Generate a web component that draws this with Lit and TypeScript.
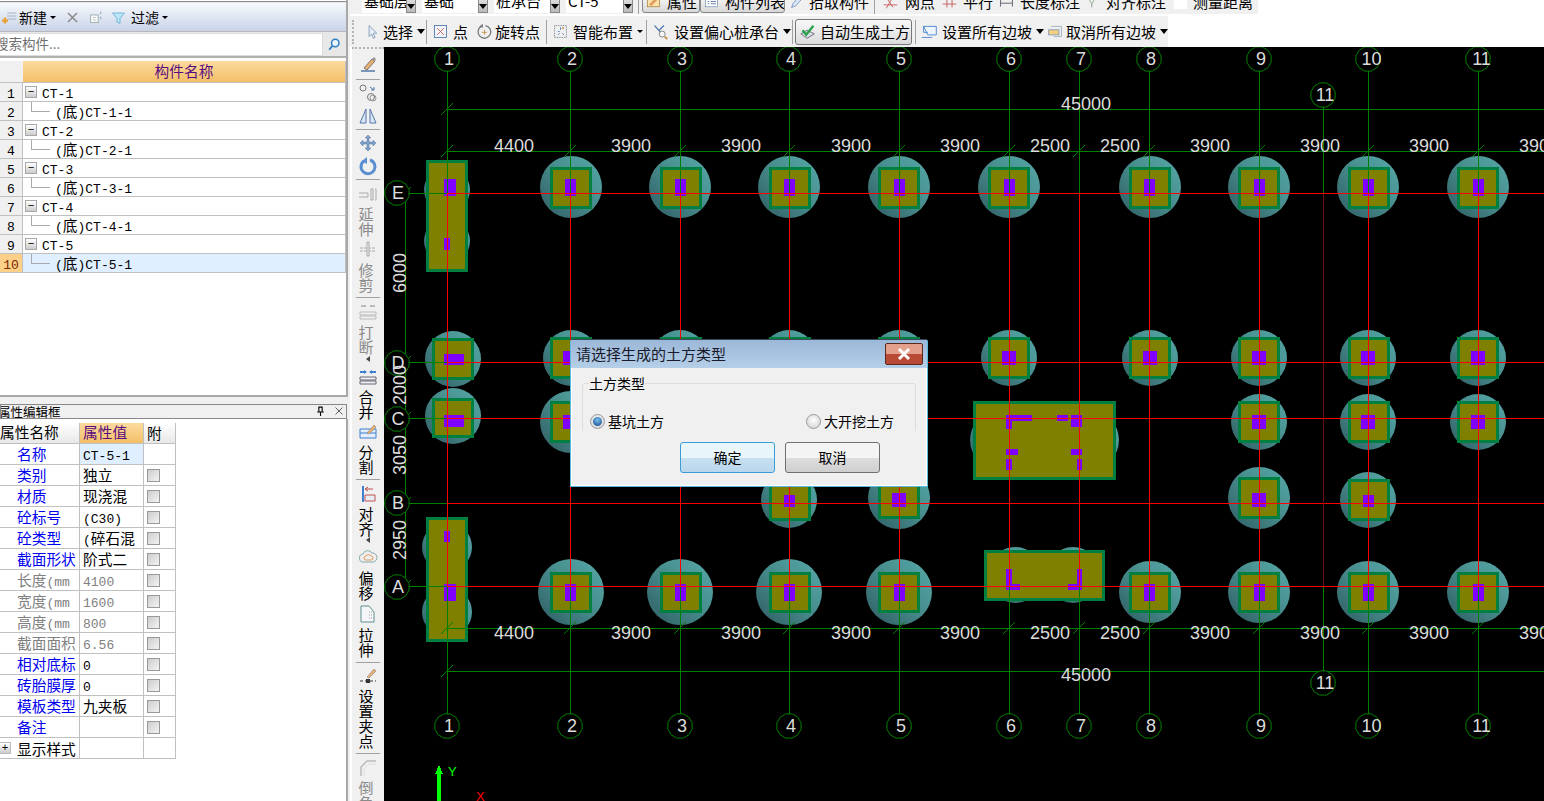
import { LitElement, html, css, svg } from 'lit';
import { customElement } from 'lit/decorators.js';

const ICONS: Record<string, any> = {
  pen: svg`<path d="M3 16h14" stroke="#5577aa" stroke-width="1.5"/><path d="M6 13l8-9 3 2-8 9z" fill="#e8b070" stroke="#777"/><path d="M14 4l3 2 1-2-2-2z" fill="#999"/>`,
  circles: svg`<circle cx="5" cy="5" r="3" fill="none" stroke="#777"/><circle cx="13" cy="14" r="3.5" fill="none" stroke="#777"/><circle cx="15" cy="15" r="3" fill="none" stroke="#999"/><path d="M12 4l4 3M16 4v3h-3" fill="none" stroke="#5577aa"/>`,
  mirror: svg`<path d="M8 3L2 17h6zM12 3l6 14h-6z" fill="#dce6f4" stroke="#5577aa"/>`,
  move: svg`<path d="M10 2l3 3h-2v4h4V7l3 3-3 3v-2h-4v4h2l-3 3-3-3h2v-4H5v2l-3-3 3-3v2h4V5H7z" fill="#7f9fc8" stroke="#5b7ba6" stroke-width=".5"/>`,
  rotate: svg`<path d="M6 5a7 7 0 1 0 6-1" fill="none" stroke="#5b8fd0" stroke-width="3"/><path d="M9 1v7l-5-3z" fill="#5b8fd0"/>`,
  extend: svg`<path d="M1 9h9v4H1M13 5h2v11h-2zM17 5h1v11h-1" fill="none" stroke="#aaa"/>`,
  trim: svg`<path d="M2 9h16M2 12h16" stroke="#aaa" stroke-dasharray="3 1"/><path d="M9 3h2v14H9z" fill="#eee" stroke="#aaa"/>`,
  breakIcon: svg`<path d="M3 4h5M12 4h5" stroke="#bbb" stroke-width="2"/><path d="M2 10h16v3H2zM2 14h16v3H2z" fill="none" stroke="#bbb"/>`,
  merge: svg`<path d="M2 5h6M18 5h-6" stroke="#3f7fd0" stroke-width="2"/><path d="M6 3l3 2-3 2zM14 3l-3 2 3 2z" fill="#3f7fd0"/><path d="M2 10h16v3H2zM2 14h16v3H2z" fill="none" stroke="#667"/>`,
  split: svg`<path d="M2 7h16v9H2z" fill="#e4eefa" stroke="#3f7fd0"/><path d="M2 11h16" stroke="#3f7fd0"/><path d="M9 11l7-8 2 2-7 7z" fill="#e8b070" stroke="#777" stroke-width=".5"/>`,
  align: svg`<path d="M5 2v16" stroke="#3f7fd0" stroke-width="2"/><path d="M7 11h10v6H7z" fill="#e8eef6" stroke="#c05050"/><path d="M7 5h8M10 3L7 5l3 2" fill="none" stroke="#c05050"/>`,
  offset: svg`<path d="M6 15a4 4 0 0 1-1-8 5 5 0 0 1 9-1 4.500 4.500 0 0 1 1 9z" fill="#eee" stroke="#8aa"/><path d="M8 13a2 2 0 0 1 0-4 3 3 0 0 1 5 0 2 2 0 0 1 0 4z" fill="none" stroke="#e09a60"/>`,
  stretch: svg`<path d="M3 2h8l5 6v10H3z" fill="#f4f6f8" stroke="#5f8f8f"/><path d="M11 8h4M11 11h4M11 14h4" stroke="#999" stroke-dasharray="1 1"/>`,
  grip: svg`<path d="M2 15h16" stroke="#333" stroke-dasharray="3 2"/><rect x="8" y="13" width="4" height="4" fill="#333"/><path d="M9 11l7-8 2 2-7 7z" fill="#e8b070" stroke="#777" stroke-width=".5"/>`,
  chamfer: svg`<path d="M3 18V9l6-6h9" fill="none" stroke="#bbb" stroke-width="1.500"/><path d="M6 18v-7l5-5h7" fill="none" stroke="#ddd"/>`,
  cursor: svg`<path d="M6 3v13l3-3 2 5 2-1-2-5h4z" fill="#e6edf6" stroke="#7d94b5"/>`,
  point: svg`<rect x="3" y="3" width="14" height="14" fill="#f2f6fc" stroke="#4a74ad"/><path d="M6 6l8 8M14 6l-8 8" stroke="#c05050"/>`,
  rotPoint: svg`<path d="M6 4a7.500 7.500 0 1 0 5-1" fill="none" stroke="#777" stroke-width="1.500"/><path d="M8 1v5L4 4z" fill="#777"/><path d="M10 8v6M7 11h6" stroke="#c08a40"/>`,
  smart: svg`<rect x="3" y="3" width="14" height="14" fill="none" stroke="#667" stroke-dasharray="1 1"/><path d="M10 5v3M7 10h2M12 12l2 2M7 14l2-2" stroke="#4a74ad"/><rect x="12" y="5" width="2" height="2" fill="#c08a40"/>`,
  offsetCap: svg`<path d="M3 3l8 9M14 3l-6 6" stroke="#4a74ad" stroke-width="1.500"/><circle cx="12" cy="13" r="3.500" fill="#f4f6f8" stroke="#777"/><path d="M15 16l3 3" stroke="#c08a40" stroke-width="2"/>`,
  check: svg`<path d="M2 12l7 5 8-5-8-4z" fill="#d8dde8" stroke="#667"/><path d="M4 8l4 5 8-10" fill="none" stroke="#25a045" stroke-width="2.500"/>`,
  slope: svg`<path d="M3 4h15v10H8z" fill="#eef4fb" stroke="#3f7fd0"/><path d="M3 4v7h5M1 17h12" fill="none" stroke="#3f7fd0"/>`,
  slopeOff: svg`<rect x="2" y="8" width="12" height="6" fill="#f2d080" stroke="#7d94b5"/><path d="M5 4h12v12H8" fill="none" stroke="#9ab"/>`,
  prop: svg`<rect x="2" y="3" width="16" height="14" fill="#fbe2a8" stroke="#a68040"/><path d="M4 14l8-8 3 2-8 8z" fill="#e09a60"/>`,
  list: svg`<rect x="2" y="3" width="16" height="14" fill="#fff" stroke="#7d94b5"/><path d="M5 7h2M5 10h2M5 13h2M9 7h7M9 10h7M9 13h7" stroke="#3a5f9a"/>`,
  pick: svg`<path d="M3 17l2-5 8-9 3 3-8 9z" fill="#dce6f4" stroke="#6f8fc0"/>`,
  net: svg`<path d="M2 14h16M14 3L5 18M5 5l8 12" stroke="#c05050"/>`,
  parallel: svg`<path d="M2 7h16M2 13h16M7 3v14M13 3v14" stroke="#c05050"/>`,
  length: svg`<path d="M3 6v10M17 6v10M3 12h14" stroke="#556"/><path d="M5 3h2M10 3h2" stroke="#8a7"/>`,
  alignDim: svg`<path d="M3 4l5 9 5-9" fill="none" stroke="#8a8"/><path d="M8 13v4" stroke="#888"/>`,
  doc: svg`<rect x="3" y="7" width="9" height="9" fill="#f4f6f8" stroke="#9aa"/><path d="M6 10h3M6 13h3" stroke="#bbb"/><path d="M15 3v3M15 9v3" stroke="#7d94b5"/>`,
  plus: svg`<path d="M7 4h12M7 8h12M7 12h12" stroke="#8fa0b8"/><path d="M4 10v8M0 14h8" stroke="#e8a030" stroke-width="3"/>`,
  del: svg`<path d="M4 4l12 12M16 4L4 16" stroke="#8c8c8c" stroke-width="2"/>`,
  filter: svg`<path d="M2 4h16l-6 7v7l-4-2v-5z" fill="#bfe6f6" stroke="#55a8d0"/>`,
  search: svg`<circle cx="11" cy="8" r="5" fill="#e8f4fc" stroke="#2f7fc0" stroke-width="2"/><path d="M7 12l-4 5" stroke="#2f7fc0" stroke-width="2.500"/>`,
  pin: svg`<path d="M6 2h8M7 2v9M13 2v9M4 11h12M10 11v7" fill="none" stroke="#000" stroke-width="2"/>`,
  closeX: svg`<path d="M3 3l14 14M17 3L3 17" stroke="#333" stroke-width="1.500"/>`,
};

const icon = (name: string, size = 20) =>
  html`<svg class="icon" width=${size} height=${size} viewBox="0 0 20 20">${ICONS[name]}</svg>`;

// latin goes in the mono font, at half the width of the cjk glyphs
const mix = (s: string) =>
  s.split(/([\x20-\x7e]+)/).map((p) => (/^[\x20-\x7e]+$/.test(p) ? html`<span class="lat">${p}</span>` : p));

const TREE = ['CT-1', 'CT-2', 'CT-3', 'CT-4', 'CT-5'];

const PROPS = [
  { n: '名称', v: 'CT-5-1', k: 'blue', active: true, nocheck: true },
  { n: '类别', v: '独立', k: 'blue' },
  { n: '材质', v: '现浇混', k: 'blue' },
  { n: '砼标号', v: '(C30)', k: 'blue' },
  { n: '砼类型', v: '(碎石混', k: 'blue' },
  { n: '截面形状', v: '阶式二', k: 'blue' },
  { n: '长度(mm', v: '4100', k: 'grey' },
  { n: '宽度(mm', v: '1600', k: 'grey' },
  { n: '高度(mm', v: '800', k: 'grey' },
  { n: '截面面积', v: '6.56', k: 'grey' },
  { n: '相对底标', v: '0', k: 'blue' },
  { n: '砖胎膜厚', v: '0', k: 'blue' },
  { n: '模板类型', v: '九夹板', k: 'blue' },
  { n: '备注', v: '', k: 'blue' },
];

type Slot = { w: number; iw?: number; icon?: string; label?: string; arrow?: string; sep?: boolean; on?: boolean; blank?: boolean };

const ROW1: Slot[] = [
  { w: 90, iw: 24, icon: 'pick', label: '拾取构件' },
  { w: 1, sep: true },
  { w: 60, iw: 30, icon: 'net', label: '网点' },
  { w: 58, iw: 28, icon: 'parallel', label: '平行' },
  { w: 87, iw: 27, icon: 'length', label: '长度标注' },
  { w: 86, iw: 26, icon: 'alignDim', label: '对齐标注' },
  { w: 27, blank: true },
  { w: 64, iw: 0, label: '测量距离' },
];

const ROW2: Slot[] = [
  { w: 64, iw: 21, icon: 'cursor', label: '选择', arrow: 'big' },
  { w: 1, sep: true },
  { w: 46, iw: 26, icon: 'point', label: '点' },
  { w: 73, iw: 22, icon: 'rotPoint', label: '旋转点' },
  { w: 1, sep: true },
  { w: 99, iw: 26, icon: 'smart', label: '智能布置', arrow: 'small' },
  { w: 1, sep: true },
  { w: 145, iw: 27, icon: 'offsetCap', label: '设置偏心桩承台', arrow: 'big' },
  { w: 1, sep: true },
  { w: 122, on: true, iw: 25, icon: 'check', label: '自动生成土方' },
  { w: 1, sep: true },
  { w: 128, iw: 26, icon: 'slope', label: '设置所有边坡', arrow: 'big' },
  { w: 123, iw: 22, icon: 'slopeOff', label: '取消所有边坡', arrow: 'big' },
];

type VTool = { sep?: boolean; h?: number; icon?: string; label?: string; grey?: boolean; arrow?: number; pad?: number };

const VTOOLS: VTool[] = [
  { h: 25, icon: 'pen' },
  { sep: true },
  { h: 23, icon: 'circles' },
  { h: 23, icon: 'mirror' },
  { sep: true },
  { h: 23, icon: 'move' },
  { h: 23, icon: 'rotate' },
  { sep: true },
  { h: 25, icon: 'extend', label: '延伸', grey: true },
  { h: 26, icon: 'trim', label: '修剪', grey: true, pad: 3 },
  { sep: true },
  { h: 25, icon: 'breakIcon', label: '打断', grey: true, arrow: 10 },
  { h: 25, icon: 'merge', label: '合并' },
  { h: 25, icon: 'split', label: '分割', pad: 3 },
  { sep: true },
  { h: 25, icon: 'align', label: '对齐', arrow: 8 },
  { h: 26, icon: 'offset', label: '偏移' },
  { h: 27, icon: 'stretch', label: '拉伸', pad: 3 },
  { sep: true },
  { h: 24, icon: 'grip', label: '设置夹点', pad: 3 },
  { sep: true },
  { h: 25, icon: 'chamfer', label: '倒角', grey: true },
];

// canvas data, page coordinates
const COLS = [447, 570, 680, 789, 899, 1009, 1079, 1149, 1259, 1368, 1478];
const ROWS = [
  { l: 'E', y: 193, by: 193 },
  { l: 'D', y: 362, by: 363 },
  { l: 'C', y: 418, by: 419 },
  { l: 'B', y: 503, by: 503 },
  { l: 'A', y: 586, by: 587 },
];

type Pile = { x: number; cy: number; r: number; top: number; bot: number; pw: number; pt: number; pb: number; cap?: number; px?: number };

// the drawing is a pixel off the axis on some columns
const CIRCLE_X: Record<number, number> = { 570: 571, 1149: 1150 };
const CAP_X: Record<number, number> = { 570: 571, 680: 681, 789: 790, 1149: 1150, 1368: 1369 };

const E = { cy: 187, r: 31, top: 167, bot: 209, pw: 11, pt: 179, pb: 196 };
const D = { cy: 358, r: 28, top: 337, bot: 379, pw: 14, pt: 351, pb: 365 };
const C = { cy: 422, r: 28, top: 401, bot: 443, pw: 14, pt: 415, pb: 429 };
const A = { cy: 592, r: 31, top: 572, bot: 613, pw: 11, pt: 584, pb: 601 };
const BIG = { cy: 498, r: 31, top: 477, bot: 519, pw: 14, pt: 493, pb: 507 };
const SMALL = { cy: 500, r: 28, top: 479, bot: 521, pw: 11, pt: 495, pb: 507 };

const PILES: Pile[] = [
  ...[570, 680, 789, 899, 1009, 1149, 1259, 1368, 1478].map((x) => ({ x, ...E })),
  ...[570, 680, 789, 899, 1009, 1259, 1368, 1478].map((x) => ({ x, ...D })),
  { x: 1149, ...D, px: 1150 },
  ...[1259, 1368, 1478].map((x) => ({ x, ...C })),
  { x: 570, ...C, r: 31 },
  { x: 789, ...SMALL },
  { x: 899, ...BIG },
  { x: 1259, ...BIG },
  { x: 1368, ...SMALL },
  ...[570, 680, 789, 899].map((x) => ({ x, ...A, r: 33 })),
  ...[1149, 1259, 1368, 1478].map((x) => ({ x, ...A })),
  { x: 453, cy: 359, r: 28, top: 338, bot: 380, pw: 20, pt: 354, pb: 365, px: 454, cap: 453 },
  { x: 453, cy: 416, r: 28, top: 398, bot: 438, pw: 20, pt: 415, pb: 427, px: 454, cap: 453 },
];

// big footings: [x, y, w, h]
const FOOTINGS = [
  { r: [426, 160, 42, 112], c: [[447, 190, 23], [447, 241, 23]] },
  { r: [426, 517, 42, 125], c: [[447, 547, 25], [447, 612, 25]] },
  { r: [973, 401, 143, 79], c: [[1000, 440, 30], [1089, 440, 30]] },
  { r: [984, 550, 121, 51], c: [[1015, 575, 28], [1073, 575, 28]] },
];

const PURPLE = [
  [444, 179, 12, 17], [444, 238, 6, 12], [444, 531, 6, 11], [444, 584, 12, 17],
  [1006, 415, 26, 6], [1006, 421, 6, 8], [1057, 415, 11, 6], [1071, 415, 11, 12],
  [1006, 449, 12, 6], [1071, 449, 11, 6], [1006, 459, 6, 11], [1077, 459, 5, 11],
  [1006, 569, 6, 21], [1006, 584, 14, 6], [1077, 569, 5, 21], [1068, 584, 14, 6],
];

const DIMS = [
  { t: '4400', x: 514 }, { t: '3900', x: 631 }, { t: '3900', x: 741 }, { t: '3900', x: 851 },
  { t: '3900', x: 960 }, { t: '2500', x: 1050 }, { t: '2500', x: 1120 }, { t: '3900', x: 1210 },
  { t: '3900', x: 1320 }, { t: '3900', x: 1429 }, { t: '3900', x: 1539 },
];

const SIDE_DIMS = [
  { t: '6000', y: 273 }, { t: '2000', y: 385 }, { t: '3050', y: 455 }, { t: '2950', y: 540 },
];

const bubblePts = (cx: number, cy: number, r = 12.5) =>
  Array.from({ length: 12 }, (_, i) => {
    const a = (i * Math.PI) / 6 + Math.PI / 12;
    return `${(cx + r * Math.cos(a)).toFixed(1)},${(cy + r * Math.sin(a)).toFixed(1)}`;
  }).join(' ');

const bubble = (cx: number, cy: number, label: string, dx = 2) => svg`
  <polygon class="bub" points=${bubblePts(cx, cy)}></polygon>
  <text class="lbl" x=${cx + dx} y=${cy + 6} text-anchor="middle">${label}</text>`;

const tick = (x: number, y: number) => svg`<line class="g thin" x1=${x - 6} y1=${y + 6} x2=${x + 6} y2=${y - 6}></line>`;

const hl = (cls: string, y: number, x1: number, x2: number) => svg`<rect class=${cls} x=${x1} y=${y} width=${x2 - x1} height="1"></rect>`;
const vl = (cls: string, x: number, y1: number, y2: number) => svg`<rect class=${cls} x=${x} y=${y1} width="1" height=${y2 - y1}></rect>`;

@customElement('app-root')
export class AppRoot extends LitElement {
  static styles = css`
    :host {
      display: grid;
      grid-template-columns: 350px 34px 1160px;
      grid-template-rows: 47px 754px;
      width: 1544px;
      height: 801px;
      overflow: hidden;
      position: relative;
      background: #fff;
      font-family: 'Noto Sans CJK SC', sans-serif;
      font-size: 14.7px;
      color: #000;
    }
    .lat { font-family: 'Liberation Mono', monospace; font-size: 13px; }
    .icon { display: block; flex: none; }

    /* left column */
    .left { grid-row: 1 / 3; display: flex; flex-direction: column; background: #f0f0f0; overflow: hidden; }
    .tree-panel { height: 397px; flex: none; background: #fff; border-bottom: 2px solid #a8a8a8; border-right: 2px solid #a8a8a8; box-sizing: border-box; display: flex; flex-direction: column; width: 348px; }
    .top-line { height: 3px; flex: none; background: linear-gradient(#fff 33%, #8a8a8a 33%, #8a8a8a 66%, #e8e8e8 66%); }
    .ltb { height: 29px; flex: none; display: flex; align-items: center; background: linear-gradient(#f6f8fc, #c9d4e8); border-bottom: 1px solid #b8b8b8; font-size: 14px; box-sizing: border-box; }
    .ltb .new { margin-left: 2px; }
    .tri-s { width: 0; height: 0; border: 3px solid transparent; border-top: 3px solid #000; border-bottom: 0; flex: none; }
    .search { height: 26px; flex: none; display: flex; background: #e8e8e8; border-bottom: 2px solid #b0b0b0; box-sizing: border-box; padding-top: 1px; }
    .search-box { width: 323px; height: 23px; background: #fff; border: 1px solid #ddd; border-left: 0; font-size: 13.5px; line-height: 19px; color: #707070; text-indent: -5px; overflow: hidden; box-sizing: border-box; }
    .search-btn { flex: 1; display: flex; justify-content: center; align-items: center; }
    .tree { margin-top: 3px; width: 346px; flex: none; border-right: 1px solid #c0c0c0; box-sizing: border-box; }
    .tree-head { display: flex; height: 22px; border-bottom: 1px solid #c0c0c0; box-sizing: border-box; }
    .num-head { width: 23px; background: #f0f0f0; flex: none; }
    .orange { background: linear-gradient(#fcdb9e, #f3bf68); color: #5a0a80; }
    .tree-head .orange { flex: 1; text-align: center; line-height: 19px; }
    .tree-row { display: flex; height: 19px; border-bottom: 1px solid #c0c0c0; box-sizing: border-box; line-height: 17px; }
    .tree-row .num { width: 23px; flex: none; background: #f0f0f0; border-right: 1px solid #c0c0c0; text-align: center; box-sizing: border-box; }
    .tree-row.sel { background: #dfefff; }
    .tree-row.sel .num { background: #fdd08a; color: #7a2a00; }
    .exp { width: 12px; height: 12px; border: 1px solid #a8a8a8; background: linear-gradient(#fff, #ccc); margin: 3px 5px 0 2px; box-sizing: border-box; display: flex; align-items: center; justify-content: center; flex: none; font: 11px/10px 'Liberation Mono', monospace; }
    .elbow { width: 19px; height: 10px; border-left: 1px solid #aaa; border-bottom: 1px solid #aaa; margin: 0 5px 0 8px; box-sizing: border-box; flex: none; }

    .title { margin-top: 7px; flex: none; width: 347px; border: 1px solid #888; box-sizing: border-box; background: #f0f0f0; display: flex; align-items: center; font-size: 12.5px; height: 15px; text-indent: -3px; overflow: hidden; }
    .title span { flex: 1; }
    .title .btns { flex: none; display: flex; gap: 8px; margin-right: 2px; }
    .prop-panel { flex: 1; width: 348px; background: #fff; border-right: 2px solid #a8a8a8; box-sizing: border-box; padding-top: 4px; }
    .pt { width: 176px; border-right: 1px solid #c0c0c0; box-sizing: border-box; }
    .pr { display: grid; grid-template-columns: 80px 64px 31px; height: 21px; border-bottom: 1px solid #c0c0c0; box-sizing: border-box; line-height: 19px; }
    .pr > div { border-right: 1px solid #c0c0c0; overflow: hidden; white-space: nowrap; }
    .pr > div:last-child { border-right: 0; display: flex; align-items: center; }
    .pr .name { padding-left: 17px; }
    .pr .val { padding-left: 3px; }
    .ph { background: linear-gradient(#fff, #e8e8e8); }
    .pr.ph .orange { padding-left: 3px; background: linear-gradient(#fcdb9e, #f3bf68); }
    .pr.ph > div:last-child { padding-left: 3px; }
    .ph > div { line-height: 18px; }
    .blue { color: #0000f0; }
    .grey { color: #808080; }
    .active { background: #dfefff; }
    .chk { width: 13px; height: 13px; border: 1px solid #999; margin-left: 3px; background: linear-gradient(135deg, #ccc, #f4f4f4); box-sizing: border-box; }
    .expand-row .name { padding-left: 0; display: flex; align-items: center; gap: 6px; }
    .plus { width: 12px; height: 12px; border: 1px solid #bbb; margin-left: -1px; background: linear-gradient(#fff, #ccc); font: 11px/10px 'Liberation Mono', monospace; text-align: center; box-sizing: border-box; flex: none; }

    /* top toolbars */
    .top { grid-column: 2 / 4; display: flex; flex-direction: column; background: #fff; overflow: hidden; font-size: 15px; }
    .row1 { height: 14px; width: 908px; background: #f0f0f0; display: flex; align-items: flex-end; flex: none; padding-left: 12px; box-sizing: border-box; }
    .row2 { margin-top: 2px; height: 31px; width: 818px; background: #f0f0f0; display: flex; align-items: center; flex: none; padding-left: 2px; box-sizing: border-box; }
    .grips { width: 4px; height: 24px; margin-right: 6px; flex: none; border-left: 2px dotted #b4b4b4; box-sizing: border-box; }
    .combo { display: flex; height: 20px; margin: 0 6px 1px 0; background: #fff; flex: none; }
    .combo .txt { padding-left: 2px; overflow: hidden; white-space: nowrap; line-height: 15px; box-sizing: border-box; }
    .combo .drop { width: 10px; background: linear-gradient(#eee, #bbb); border: 1px solid #888; box-sizing: border-box; display: flex; align-items: flex-end; justify-content: center; padding-bottom: 3px; }
    .tri { width: 0; height: 0; flex: none; border: 4px solid transparent; border-top: 5px solid #000; border-bottom: 0; }
    .row1 .sepv { height: 14px; margin-left: -1px; }
    .row1 .slot .sepv { margin-left: 0; }
    .row1 .slot { padding-bottom: 5px; box-sizing: border-box; }
    .sepv { width: 1px; height: 24px; background: #a0a0a0; flex: none; }
    .slot { display: flex; align-items: center; flex: none; white-space: nowrap; height: 20px; line-height: 20px; }
    .slot .ic { display: flex; justify-content: center; flex: none; }
    .slot .tri, .slot .tri-s { margin-left: 4px; }
    .toggled { border: 1px solid #888; border-radius: 3px; background: linear-gradient(#fbfbfb, #d8d8d8); height: 19px; margin-bottom: 1px; padding: 0 0 4px 3px; box-sizing: border-box; display: flex; align-items: center; gap: 4px; flex: none; font-size: 15px; white-space: nowrap; line-height: 15px; overflow: hidden; }
    .auto { margin-left: 2px; margin-right: 3px; width: 117px; height: 26px; border: 1px solid #777; border-radius: 3px; background: linear-gradient(#f8f8f8, #dcdcdc); display: flex; align-items: center; box-sizing: border-box; }
    .auto .ic { width: 24px; display: flex; justify-content: center; }
    .blankbox { width: 13px; height: 14px; margin-left: 8px; background: #fff; }

    /* vertical toolbar */
    .vbar { background: #f0f0f0; border-left: 2px solid #fff; box-sizing: border-box; display: flex; flex-direction: column; align-items: center; overflow: hidden; }
    .vgrip { height: 5px; width: 100%; border-top: 2px dotted #b4b4b4; box-sizing: border-box; flex: none; }
    .vsep { height: 4px; width: 24px; display: flex; align-items: center; flex: none; }
    .vsep i { display: block; height: 1px; width: 100%; background: #a0a0a0; }
    .vt { display: flex; flex-direction: column; align-items: center; flex: none; }
    .vi { display: flex; align-items: center; justify-content: center; }
    .vl { font-size: 15px; line-height: 15px; width: 16px; margin-right: 4px; text-align: center; word-break: break-all; }
    .vl.off { color: #8a8a8a; }
    .varr-wrap { display: flex; align-items: center; }
    .varr { width: 0; height: 0; border: 3px solid transparent; border-right: 4px solid #444; border-left: 0; }

    /* canvas */
    .canvas { display: block; background: #000; shape-rendering: crispEdges; }
    .canvas text { font-family: 'Liberation Sans', sans-serif; font-size: 18px; fill: #dcdcdc; shape-rendering: auto; }
    .bub { fill: #000; stroke: #008000; stroke-width: 1; shape-rendering: auto; }
    .canvas line.g { stroke: #008000; shape-rendering: auto; }
    .gl { fill: #008000; }
    .rl { fill: #ff0000; }
    .dl { fill: #6a1010; }
    .pile { fill: url(#teal); shape-rendering: auto; }
    .capo { fill: #008040; }
    .capi { fill: #808000; }
    .pu { fill: #8000ff; }
    .axis-y { fill: #00ff00; }
    .canvas text.ax { font-size: 13px; }

    /* dialog */
    .dlg { position: absolute; left: 570px; top: 339px; width: 358px; height: 148px; background: #f0f0f0; border: 1px solid #5bb9d9; border-top-color: #3a4a5a; border-radius: 3px 3px 0 0; box-sizing: border-box; font-size: 14px; box-shadow: inset 0 0 0 1px #fff; }
    .dlg-title { height: 28px; display: flex; align-items: center; padding: 0 0 2px 5px; box-sizing: border-box; background: linear-gradient(#9cb8d8, #b5cfe8); font-size: 15px; color: #1a1a2a; position: relative; }
    .dlg-close { position: absolute; right: 4px; top: 3px; width: 38px; height: 22px; border: 1px solid #5a2a20; border-radius: 2px; box-sizing: border-box; background: linear-gradient(#e3a08c 0 50%, #b84a36 50%); display: flex; align-items: center; justify-content: center; }
    fieldset { margin: 7px 11px 0 11px; padding: 0; height: 56px; border: 1px solid #dcdcdc; border-bottom: 0; border-radius: 3px 3px 0 0; box-sizing: border-box; display: flex; min-width: 0; }
    legend { margin-left: 6px; padding: 0; line-height: 16px; }
    .radios { display: flex; justify-content: space-between; width: 100%; padding: 20px 21px 0 7px; box-sizing: border-box; line-height: 20px; }
    .radio { display: flex; align-items: center; gap: 3px; }
    .rd { width: 15px; height: 15px; border-radius: 50%; border: 1px solid #999; box-sizing: border-box; background: radial-gradient(circle at 50% 40%, #fff, #ccc); display: flex; align-items: center; justify-content: center; }
    .rd.on i { display: block; width: 9px; height: 9px; border-radius: 50%; background: radial-gradient(circle at 50% 35%, #7ac0f0, #0a3f80); }
    .btns-row { display: flex; gap: 10px; margin: 11px 0 0 109px; }
    .btn { width: 95px; height: 31px; border-radius: 3px; box-sizing: border-box; text-align: center; line-height: 29px; font-size: 14px; }
    .btn.pri { border: 1px solid #3c9cd8; background: linear-gradient(#e8f5fa 0 50%, #c8e0f0 50%, #b9d6ec); }
    .btn.sec { border: 1px solid #707070; background: linear-gradient(#f4f4f4 0 50%, #dedede 50%, #cfcfcf); }
  `;

  renderTree() {
    const rows: unknown[] = [];
    TREE.forEach((name, i) => {
      rows.push(html`<div class="tree-row">
        <div class="num"><span class="lat">${i * 2 + 1}</span></div>
        <div class="exp">−</div>
        <span>${mix(name)}</span>
      </div>`);
      rows.push(html`<div class="tree-row ${i === 4 ? 'sel' : ''}">
        <div class="num"><span class="lat">${i * 2 + 2}</span></div>
        <div class="elbow"></div>
        <span>${mix('(底)' + name + '-1')}</span>
      </div>`);
    });
    return rows;
  }

  renderProps() {
    return PROPS.map(
      (p) => html`<div class="pr">
        <div class="name ${p.k}">${mix(p.n)}</div>
        <div class="val ${p.active ? 'active' : ''} ${p.k === 'grey' ? 'grey' : ''}">${mix(p.v)}</div>
        <div>${p.nocheck ? '' : html`<div class="chk"></div>`}</div>
      </div>`
    );
  }

  renderSlot(s: Slot) {
    if (s.sep) return html`<div class="sepv"></div>`;
    if (s.blank) return html`<div class="slot" style="width:${s.w}px"><div class="blankbox"></div></div>`;
    if (s.on)
      return html`<div class="slot" style="width:${s.w}px;height:26px">
        <div class="auto"><div class="ic">${icon(s.icon!, 18)}</div>${s.label}</div>
      </div>`;
    return html`<div class="slot" style="width:${s.w}px">
      <div class="ic" style="width:${s.iw}px">${s.icon ? icon(s.icon, 17) : ''}</div>
      ${s.label}
      ${s.arrow === 'big' ? html`<div class="tri"></div>` : s.arrow === 'small' ? html`<div class="tri-s"></div>` : ''}
    </div>`;
  }

  renderTop() {
    const combos = [
      ['基础层', 44],
      ['基础', 56],
      ['桩承台', 56],
      ['CT-5', 57],
    ] as const;
    return html`<div class="top">
      <div class="row1">
        ${combos.map(
          ([t, w]) => html`<div class="combo">
            <div class="txt" style="width:${w}px">${t}</div>
            <div class="drop"><div class="tri"></div></div>
          </div>`
        )}
        <div class="sepv"></div>
        <div class="toggled" style="margin-left:3px;width:58px">${icon('prop', 15)}<span style="margin-left:2px">属性</span></div>
        <div class="toggled" style="width:85px">${icon('list', 15)}<span style="margin-left:2px">构件列表</span></div>
        ${ROW1.map((s) => this.renderSlot(s))}
      </div>
      <div class="row2">
        <div class="grips"></div>
        ${ROW2.map((s) => this.renderSlot(s))}
      </div>
    </div>`;
  }

  renderVbar() {
    return html`<div class="vbar">
      <div class="vgrip"></div>
      ${VTOOLS.map((t) =>
        t.sep
          ? html`<div class="vsep"><i></i></div>`
          : html`<div class="vt" style="padding-bottom:${t.pad ?? 0}px">
              <div class="vi" style="height:${t.h}px">${icon(t.icon!)}</div>
              ${t.label ? html`<div class="vl ${t.grey ? 'off' : ''}">${t.label}</div>` : ''}
              ${t.arrow ? html`<div class="varr-wrap" style="height:${t.arrow}px"><div class="varr"></div></div>` : ''}
            </div>`
      )}
    </div>`;
  }

  renderCanvas() {
    return html`<svg class="canvas" width="1160" height="754" viewBox="384 47 1160 754">
      <defs>
        <linearGradient id="teal" x1="0" y1="1" x2="1" y2="0">
          <stop offset="0" stop-color="#2f5c62"></stop>
          <stop offset="0.6" stop-color="#4a9292"></stop>
          <stop offset="1" stop-color="#56a8a8"></stop>
        </linearGradient>
      </defs>
      ${PILES.map((p) => svg`<circle class="pile" cx=${CIRCLE_X[p.x] ?? p.x} cy=${p.cy} r=${p.r}></circle>`)}
      ${FOOTINGS.flatMap((f) => f.c.map((c) => svg`<circle class="pile" cx=${c[0]} cy=${c[1]} r=${c[2]}></circle>`))}
      ${PILES.map((p) => {
        const cx = p.cap ?? CAP_X[p.x] ?? p.x;
        const mid = p.px ?? p.x;
        return svg`
          <rect class="capo" x=${cx - 21} y=${p.top} width="42" height=${p.bot - p.top}></rect>
          <rect class="capi" x=${cx - 18} y=${p.top + 3} width="36" height=${p.bot - p.top - 6}></rect>
          <rect class="pu" x=${mid - Math.floor(p.pw / 2)} y=${p.pt} width=${p.pw} height=${p.pb - p.pt}></rect>`;
      })}
      ${FOOTINGS.map(
        ({ r: [x, y, w, h] }) => svg`
          <rect class="capo" x=${x} y=${y} width=${w} height=${h}></rect>
          <rect class="capi" x=${x + 3} y=${y + 3} width=${w - 6} height=${h - 6}></rect>`
      )}
      ${PURPLE.map(([x, y, w, h]) => svg`<rect class="pu" x=${x} y=${y} width=${w} height=${h}></rect>`)}

      ${hl('gl', 109, 447, 1544)} ${hl('gl', 151, 447, 1544)} ${hl('gl', 628, 447, 1544)} ${hl('gl', 671, 447, 1544)}
      ${vl('gl', 405, 193, 587)}
      ${ROWS.map((r) => svg`${hl('gl', r.y, 384, 447)}${hl('rl', r.y, 447, 1544)}${tick(405, r.y)}`)}
      ${COLS.map(
        (x) => svg`
          ${vl('gl', x, 71, 193)}${vl('rl', x, 193, 587)}${vl('gl', x, 587, 714)}
          ${tick(x, 151)}${tick(x, 628)}`
      )}
      ${tick(447, 109)}${tick(447, 671)}
      ${vl('gl', 1323, 107, 193)}${vl('dl', 1323, 194, 586)}${vl('gl', 1323, 587, 671)}

      ${COLS.map((x, i) => {
        const dx = i >= 9 ? 3.5 : 2;
        return svg`${bubble(x, 59, String(i + 1), dx)}${bubble(x, 726, String(i + 1), dx)}`;
      })}
      ${bubble(1323, 95, '11')}${bubble(1323, 683, '11')}
      ${ROWS.map((r) => bubble(397, r.by, r.l, 1))}

      ${DIMS.map(
        (d) => svg`
          <text x=${d.x} y="152" text-anchor="middle">${d.t}</text>
          <text x=${d.x} y="639" text-anchor="middle">${d.t}</text>`
      )}
      <text x="1086" y="110" text-anchor="middle">45000</text>
      <text x="1086" y="681" text-anchor="middle">45000</text>
      ${SIDE_DIMS.map(
        (d) => svg`<text transform="translate(406 ${d.y}) rotate(-90)" text-anchor="middle">${d.t}</text>`
      )}

      <rect class="axis-y" x="437" y="773" width="4" height="28"></rect>
      <polygon class="axis-y" points="439,765 443,774 435,774"></polygon>
      <text class="ax" x="448" y="776" style="fill:#00ff00">Y</text>
      <text class="ax" x="476" y="801" style="fill:#ff0000">X</text>
    </svg>`;
  }

  renderDialog() {
    return html`<div class="dlg">
      <div class="dlg-title">
        请选择生成的土方类型
        <div class="dlg-close">
          <svg width="14" height="12" viewBox="0 0 14 12"><path d="M2 1l10 10M12 1L2 11" stroke="#fff" stroke-width="3"></path></svg>
        </div>
      </div>
      <fieldset>
        <legend>土方类型</legend>
        <div class="radios">
          <div class="radio"><div class="rd on"><i></i></div>基坑土方</div>
          <div class="radio"><div class="rd"></div>大开挖土方</div>
        </div>
      </fieldset>
      <div class="btns-row">
        <div class="btn pri">确定</div>
        <div class="btn sec">取消</div>
      </div>
    </div>`;
  }

  render() {
    return html`
      <div class="left">
        <div class="tree-panel">
          <div class="top-line"></div>
          <div class="ltb">
            <div class="ic new">${icon('plus', 15)}</div>
            <span style="margin-left:2px">新建</span>
            <div class="tri-s" style="margin:0 9px 0 3px"></div>
            ${icon('del', 15)}
            <div style="margin:0 6px 0 8px">${icon('doc', 17)}</div>
            ${icon('filter', 15)}
            <span style="margin-left:5px">过滤</span>
            <div class="tri-s" style="margin-left:3px"></div>
          </div>
          <div class="search">
            <div class="search-box">搜索构件...</div>
            <div class="search-btn">${icon('search', 15)}</div>
          </div>
          <div class="tree">
            <div class="tree-head"><div class="num-head"></div><div class="orange">构件名称</div></div>
            ${this.renderTree()}
          </div>
        </div>
        <div class="title"><span>属性编辑框</span><div class="btns">${icon('pin', 11)}${icon('closeX', 10)}</div></div>
        <div class="prop-panel">
          <div class="pt">
            <div class="pr ph">
              <div>属性名称</div>
              <div class="orange">属性值</div>
              <div>附</div>
            </div>
            ${this.renderProps()}
            <div class="pr expand-row">
              <div class="name"><div class="plus">+</div>显示样式</div>
              <div></div>
              <div></div>
            </div>
          </div>
        </div>
      </div>
      ${this.renderTop()}
      ${this.renderVbar()}
      ${this.renderCanvas()}
      ${this.renderDialog()}
    `;
  }
}
